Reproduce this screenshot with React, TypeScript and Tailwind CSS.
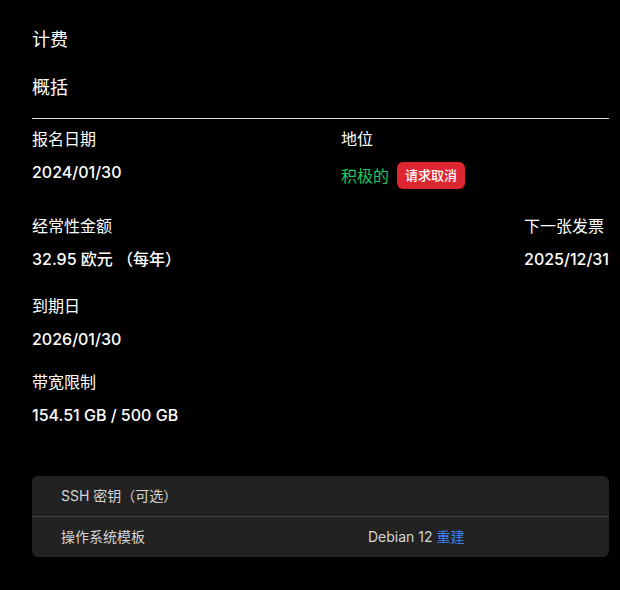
import React from "react";

const font = {
  fontFamily: '"Inter", "Noto Sans CJK SC", sans-serif',
};

const Field: React.FC<{ label: string; children: React.ReactNode }> = ({
  label,
  children,
}) => (
  <div>
    <div className="text-base leading-6 text-white">{label}</div>
    <div className="mt-[9px] text-base font-medium leading-6 text-white">
      {children}
    </div>
  </div>
);

const App: React.FC = () => {
  return (
    <div
      className="min-h-screen bg-black pl-8 pr-[11px] pt-7 text-white"
      style={font}
    >
      <h2 className="text-lg leading-6">计费</h2>
      <h3 className="mt-6 text-lg leading-6">概括</h3>
      <div className="mt-[18px] h-px bg-[#dedede]" />

      <div className="mt-2 grid grid-cols-[309px_1fr]">
        <Field label="报名日期">2024/01/30</Field>
        <div>
          <div className="text-base leading-6">地位</div>
          <div className="mt-[11px] flex items-center gap-2">
            <span className="text-base leading-6 text-[#22c55e]">积极的</span>
            <button className="h-[27px] rounded-md bg-[#dc2630] px-2 text-[13px] font-medium text-white">
              请求取消
            </button>
          </div>
        </div>
      </div>

      <div className="mt-[25px] flex justify-between">
        <Field label="经常性金额">32.95 欧元 （每年）</Field>
        <Field label="下一张发票">2025/12/31</Field>
      </div>

      <div className="mt-[23px]">
        <Field label="到期日">2026/01/30</Field>
      </div>

      <div className="mt-[19px]">
        <Field label="带宽限制">154.51 GB / 500 GB</Field>
      </div>

      <div className="mt-[49px] overflow-hidden rounded-md bg-[#222222] text-sm text-[#d4d4d4]">
        <div className="flex h-10 items-center px-[29px]">SSH 密钥（可选）</div>
        <div className="h-px bg-[#444444]" />
        <div className="grid h-10 grid-cols-[307px_1fr] items-center px-[29px]">
          <span>操作系统模板</span>
          <span>
            Debian 12 <a className="text-[#3b82f6]">重建</a>
          </span>
        </div>
      </div>
    </div>
  );
};

export default App;
